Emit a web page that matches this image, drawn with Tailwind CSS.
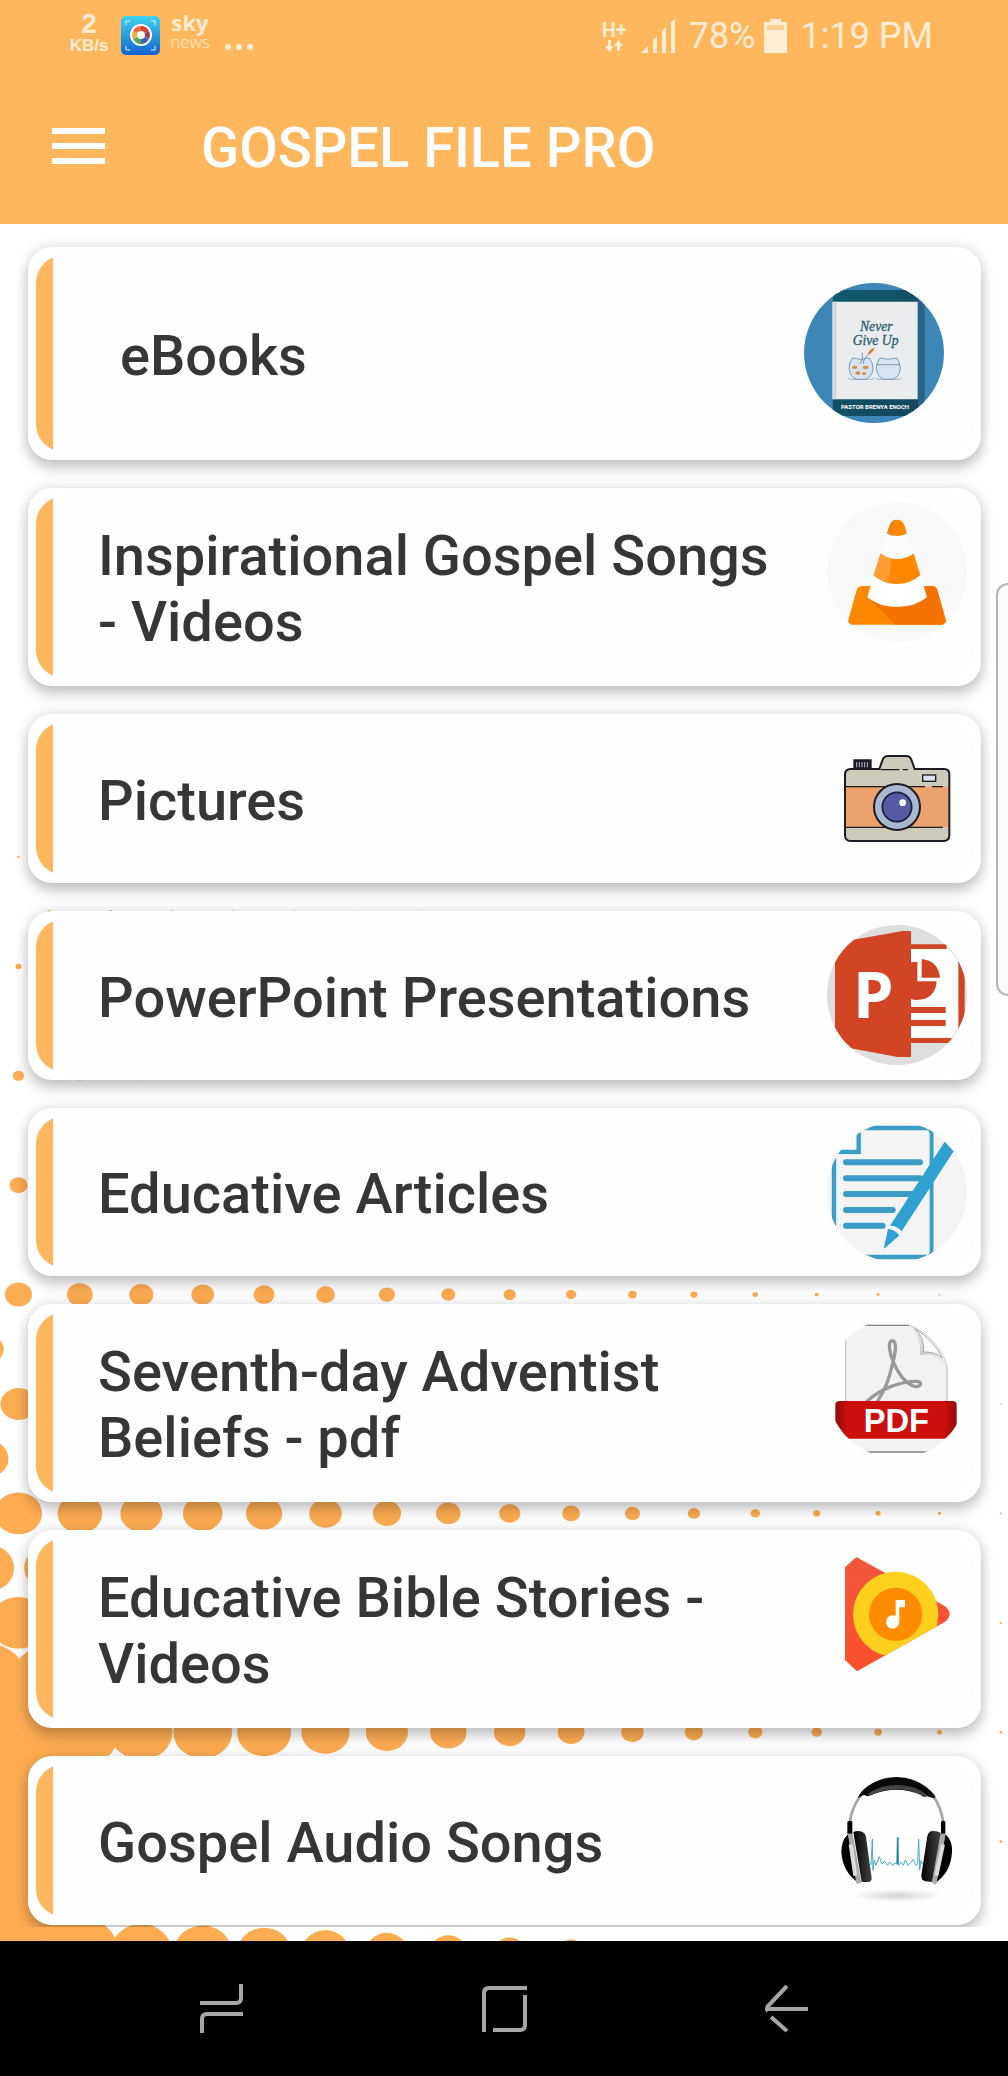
<!DOCTYPE html>
<html lang="en">
<head>
    <meta charset="UTF-8">
    <meta name="viewport" content="width=device-width, initial-scale=1.0">
    <title>Gospel File Pro</title>
    <script src="https://cdn.jsdelivr.net/npm/@tailwindcss/browser@4"></script>
</head>
<body class="bg-white font-['Roboto',sans-serif]">
    <div class="relative flex min-h-screen flex-col overflow-hidden">
        <!-- Halftone background -->
        <svg id="dots" class="absolute left-0 top-0 -z-10 h-[2076px] w-[1040px]" fill="#fdac52" aria-hidden="true"></svg>

        <!-- Header -->
        <header class="bg-[#ffb75e]">
            <div class="flex h-[71px] items-center justify-between pl-[69px] pr-[75px] text-[#ffedd3]">
                <div class="flex items-center">
                    <div class="flex w-10 flex-col items-center pb-1 font-['Liberation_Sans',sans-serif] font-bold">
                        <span class="text-[28px] leading-6">2</span>
                        <span class="text-[17px] leading-5">KB/s</span>
                    </div>
                    <svg class="ml-3 size-[39px]" viewBox="0 0 39 39">
                        <defs>
                            <linearGradient id="app" x1="0" y1="0" x2="0" y2="1">
                                <stop offset="0" stop-color="#3fd3ee"/>
                                <stop offset="1" stop-color="#1263cf"/>
                            </linearGradient>
                        </defs>
                        <rect width="39" height="39" rx="5" fill="url(#app)"/>
                        <path d="M5 9V5h4M30 5h4v4M34 30v4h-4M9 34H5v-4" fill="none" stroke="#dff4ff"/>
                        <circle cx="20" cy="19" r="11" fill="#fff"/>
                        <path d="M20 19V10a9 9 0 0 1 8 5z" fill="#d8403c"/>
                        <path d="M20 19l8-4a9 9 0 0 1 0 8z" fill="#a03a6b"/>
                        <path d="M20 19l8 4a9 9 0 0 1-8 5z" fill="#3f66ac"/>
                        <path d="M20 19v9a9 9 0 0 1-8-5z" fill="#57a85a"/>
                        <path d="M20 19l-8 4a9 9 0 0 1 0-8z" fill="#e9b13c"/>
                        <path d="M20 19l-8-4a9 9 0 0 1 8-5z" fill="#ea6b3a"/>
                        <circle cx="20" cy="19" r="4" fill="#fff"/>
                    </svg>
                    <div class="ml-2 flex w-[44px] flex-col items-center pb-2">
                        <span class="font-['Open_Sans',sans-serif] text-[22px] font-bold leading-5">sky</span>
                        <span class="font-['Open_Sans',sans-serif] text-[17px] font-light leading-5">news</span>
                    </div>
                    <svg class="ml-3 h-[39px] w-[30px]" viewBox="0 0 30 39" fill="currentColor">
                        <circle cx="4" cy="31" r="3"/><circle cx="15" cy="31" r="3"/><circle cx="26" cy="31" r="3"/>
                    </svg>
                </div>
                <div class="flex items-center text-[36px] leading-none">
                    <div class="flex flex-col items-center">
                        <span class="text-[20px] font-bold leading-5">H+</span>
                        <svg class="h-3 w-5" viewBox="0 0 20 12" fill="currentColor">
                            <path d="M4 0h3v6h3L5.500 12 1 6h3zM13 11h3V6h3l-4.500-6L10 6h3z"/>
                        </svg>
                    </div>
                    <svg class="ml-[14px] h-[34px] w-[34px]" viewBox="0 0 34 34" fill="currentColor">
                        <path d="M0 34l7-7v7zM12 21l4-4v17h-4zM21 12l4-4v26h-4zM30 3l4-3v34h-4z"/>
                    </svg>
                    <span class="ml-[14px]">78%</span>
                    <svg class="ml-2 h-[34px] w-[23px]" viewBox="0 0 23 34" fill="currentColor">
                        <path d="M6 0h11v3h6v31H0V3h6z"/>
                        <rect x="3" y="6" width="17" height="5" fill="#ffd08f"/>
                    </svg>
                    <span class="ml-[14px]">1:19 PM</span>
                </div>
            </div>
            <div class="flex h-[153px] items-center pl-[52px]">
                <button type="button" aria-label="Open menu" class="pb-1 text-white">
                    <svg class="h-9 w-[53px]" viewBox="0 0 53 36" fill="currentColor">
                        <path d="M0 0h53v6H0zM0 15h53v6H0zM0 30h53v6H0z"/>
                    </svg>
                </button>
                <h1 class="ml-24 text-[56px] font-medium leading-[66px] text-white">GOSPEL FILE PRO</h1>
            </div>
        </header>

        <!-- Category list -->
        <main class="flex-1 pb-[13px]">
            <nav class="flex flex-col gap-7 overflow-hidden pb-[2px] pl-7 pr-[27px] pt-[23px] text-[56px] font-medium leading-[66px] text-[#363636]">
                <a href="#ebooks" class="rounded-[24px] bg-white p-2 shadow-[0_8px_14px_0_rgba(0,0,0,0.2),0_0_14px_rgba(0,0,0,0.12)]">
                    <div class="flex min-h-[197px] overflow-hidden rounded-[28px] bg-[#fefefe] shadow-[0_0_2px_#f4f4f4]">
                        <div class="w-[17px] shrink-0 bg-[#ffb75e]"></div>
                        <span class="flex-1 self-center pl-[67px] pt-1">eBooks</span>
                        <svg class="mr-[29px] mt-7 size-[140px] shrink-0 rounded-full" viewBox="72 129 420 420">
                            <defs>
                                <linearGradient id="teal" x1="0" y1="0" x2="1" y2="1">
                                    <stop offset="0" stop-color="#0f5a6e"/>
                                    <stop offset="1" stop-color="#15455c"/>
                                </linearGradient>
                            </defs>
                            <path d="M72 129h420v420H72z" fill="#3d86b8"/>
                            <path d="M412 150l22 20v340l-22 18z" fill="#2b6288"/>
                            <path d="M158 150h256v378H158z" fill="url(#teal)"/>
                            <path d="M157 185h256v293H157z" fill="#ebecee"/>
                            <path d="M161 185h8v293h-8z" fill="#cfd3d8"/>
                            <g font-family="Liberation Serif, serif" font-style="italic" fill="#2d6170" stroke="#2d6170" font-size="41">
                                <text x="240" y="272">Never</text>
                                <text x="218" y="314">Give Up</text>
                            </g>
                            <path d="M262 346q4-16 22-24q-4 16-22 24z" fill="#e0763a"/>
                            <g fill="#d5e4ee" stroke="#7c9ab4" stroke-width="3">
                                <path d="M218 354q-12 14-11 32q3 24 22 32h28q20-8 22-32q0-18-11-32q-25 8-50 0z"/>
                                <path d="M300 354q-12 14-11 32q3 24 22 32h28q20-8 22-32q0-18-11-32q-25 8-50 0z"/>
                                <path d="M290 374h70" fill="none"/>
                                <path d="M240 372q12-16 6-34M250 372q0-18 14-26" fill="none"/>
                            </g>
                            <g fill="#dd8b3d">
                                <ellipse cx="224" cy="382" rx="8" ry="5"/><ellipse cx="257" cy="382" rx="9" ry="5"/>
                                <ellipse cx="234" cy="399" rx="8" ry="5"/><ellipse cx="252" cy="401" rx="6" ry="4"/>
                            </g>
                            <path d="M204 414l8 4h64l6-4M286 414l8 4h64l6-4" fill="none" stroke="#7c9ab4" stroke-width="2"/>
                            <text x="285" y="507" text-anchor="middle" font-family="Roboto, sans-serif" font-weight="700" font-size="18" fill="#fff">PASTOR BRENYA ENOCH</text>
                        </svg>
                    </div>
                </a>

                <a href="#songs-videos" class="rounded-[24px] bg-white p-2 shadow-[0_8px_14px_0_rgba(0,0,0,0.2),0_0_14px_rgba(0,0,0,0.12)]">
                    <div class="flex min-h-[182px] overflow-hidden rounded-[28px] bg-[#fefefe] shadow-[0_0_2px_#f4f4f4]">
                        <div class="w-[17px] shrink-0 bg-[#ffb75e]"></div>
                        <span class="flex-1 self-center pl-[45px] pr-11 pt-1">Inspirational Gospel Songs - Videos</span>
                        <svg class="mr-[6px] mt-[6px] size-[140px] shrink-0 rounded-full" viewBox="141 786 420 420">
                            <path d="M141 786h420v420H141z" fill="#f9f9f9"/>
                            <path d="M230 1050q4-12 18-12h206q14 0 18 12l25 90q3 14-10 14H215q-13 0-10-14z" fill="#ff8800"/>
                            <path d="M262 1070l84 84h141q13 0 10-14l-25-90q-4-12-18-12h-20z" fill="#f57200"/>
                            <path d="M302 940l-40 132q35 29 89 29t90-29l-40-132z" fill="#fff"/>
                            <path d="M302 940q22 17 49 17t50-17l20 66q-30 26-70 26t-70-26z" fill="#ff8800"/>
                            <path d="M302 940q16 12 34 15l-12 74q-24-6-43-23z" fill="#ff9f33"/>
                            <path d="M321 881q5-20 10-30q7-12 20-12t20 12q5 10 10 30q-30 16-60 0z" fill="#ff8800"/>
                            <path d="M321 881q5-20 10-30q7-12 17-12q-8 18-9 49q-10-1-18-7z" fill="#f0801a"/>
                            <path d="M321 881l-19 59q22 17 49 17t50-17l-20-59q-30 14-60 0z" fill="#fcfcfc"/>
                        </svg>
                    </div>
                </a>

                <a href="#pictures" class="rounded-[24px] bg-white p-2 shadow-[0_8px_14px_0_rgba(0,0,0,0.2),0_0_14px_rgba(0,0,0,0.12)]">
                    <div class="flex min-h-[153px] overflow-hidden rounded-[28px] bg-[#fefefe] shadow-[0_0_2px_#f4f4f4]">
                        <div class="w-[17px] shrink-0 bg-[#ffb75e]"></div>
                        <span class="flex-1 self-center pl-[45px] pr-11 pt-1">Pictures</span>
                        <svg class="mr-[6px] mt-[6px] size-[140px] shrink-0" viewBox="141 84 420 420">
                            <path d="M220 178h55v30h-55z" fill="#1c1a26"/>
                            <path d="M230 186v16M238 186v16M246 186v16M254 186v16M262 186v16" stroke="#b9bccb" stroke-width="3"/>
                            <path d="M212 207h86l10-28q4-11 16-11h54q12 0 16 11l10 28h88q16 0 16 16v183q0 17-17 17H212q-17 0-17-17V224q0-17 17-17z" fill="#cfcbbb"/>
                            <path d="M197 260h308v121H197z" fill="#eba26f"/>
                            <g fill="none" stroke="#1c1c24" stroke-width="4">
                                <path d="M302 209h56M368 209h16M197 260h238M456 260h33M197 382h292"/>
                                <path stroke-width="6" d="M212 207h86l10-28q4-11 16-11h54q12 0 16 11l10 28h88q16 0 16 16v183q0 17-17 17H212q-17 0-17-17V224q0-17 17-17z"/>
                            </g>
                            <rect x="428" y="225" width="39" height="19" fill="#d9e0f0" stroke="#1c1c24" stroke-width="4"/>
                            <circle cx="351" cy="321" r="69" fill="#a9b7cf" stroke="#1c1c24" stroke-width="6"/>
                            <circle cx="351" cy="321" r="44" fill="#535ba3" stroke="#1c1c3c" stroke-width="5"/>
                            <circle cx="368" cy="308" r="10" fill="#fff"/>
                        </svg>
                    </div>
                </a>

                <a href="#powerpoint" class="rounded-[24px] bg-white p-2 shadow-[0_8px_14px_0_rgba(0,0,0,0.2),0_0_14px_rgba(0,0,0,0.12)]">
                    <div class="flex min-h-[153px] overflow-hidden rounded-[28px] bg-[#fefefe] shadow-[0_0_2px_#f4f4f4]">
                        <div class="w-[17px] shrink-0 bg-[#ffb75e]"></div>
                        <span class="flex-1 self-center pl-[45px] pr-11 pt-1">PowerPoint Presentations</span>
                        <svg class="mr-[6px] mt-[6px] size-[140px] shrink-0 rounded-full" viewBox="141 675 420 420">
                            <path d="M141 675h420v420H141z" fill="#dedede"/>
                            <path d="M392 733h130q32 0 32 32v230q0 34-32 34H392z" fill="#d04526"/>
                            <path d="M392 747h143v267H392z" fill="#fff"/>
                            <path d="M500 747h61v-40h-61zM535 747h26v45l-10-5q-3-20-16-25z" fill="#fdfdfd"/>
                            <path d="M392 787q9-2 20-1v58h58q-4 55-60 56q-10 0-18-3zM425 777q50 5 55 56h-55z" fill="#d04526"/>
                            <path d="M392 921h105v18H392zM392 960h105v18H392z" fill="#d04526"/>
                            <path d="M165 735l55-16 148-26h25v378h-40l-140-26-48-10z" fill="#d14424"/>
                            <text x="218" y="953" font-family="Open Sans, sans-serif" font-weight="700" font-size="196" fill="#fff">P</text>
                        </svg>
                    </div>
                </a>

                <a href="#articles" class="rounded-[24px] bg-white p-2 shadow-[0_8px_14px_0_rgba(0,0,0,0.2),0_0_14px_rgba(0,0,0,0.12)]">
                    <div class="flex min-h-[152px] overflow-hidden rounded-[28px] bg-[#fefefe] shadow-[0_0_2px_#f4f4f4]">
                        <div class="w-[17px] shrink-0 bg-[#ffb75e]"></div>
                        <span class="flex-1 self-center pl-[45px] pr-11 pt-1">Educative Articles</span>
                        <svg class="mr-[6px] mt-[6px] size-[140px] shrink-0 rounded-full" viewBox="141 94 420 420">
                            <path d="M141 94h420v420H141z" fill="#f4f4f4"/>
                            <path d="M141 94h100v96H141zM141 94h420v11H141zM141 507h420v10H141z" fill="#fefefe"/>
                            <path d="M236 112v72h-74v315h280q12 0 12-12V125q0-13-13-13z" fill="#f4f4f4" stroke="#3b9cc5" stroke-width="13"/>
                            <path d="M246 126v66h-72v300M447 126v360" fill="none" stroke="#e3f3f9" stroke-width="4"/>
                            <path d="M198 215h222M198 263h222M198 310h200M198 358h140M198 405h110" stroke="#3b9cc5" stroke-width="18" stroke-linecap="round"/>
                            <path d="M494 153l27 29-156 240q-12-17-35-17z" fill="#2fa0d0"/>
                            <path d="M323 413q26 4 36 22l-46 40q-4-3-2-7z" fill="#2fa0d0" stroke="#f4f4f4" stroke-width="3"/>
                        </svg>
                    </div>
                </a>

                <a href="#beliefs" class="rounded-[24px] bg-white p-2 shadow-[0_8px_14px_0_rgba(0,0,0,0.2),0_0_14px_rgba(0,0,0,0.12)]">
                    <div class="flex min-h-[182px] overflow-hidden rounded-[28px] bg-[#fefefe] shadow-[0_0_2px_#f4f4f4]">
                        <div class="w-[17px] shrink-0 bg-[#ffb75e]"></div>
                        <span class="flex-1 self-center pl-[45px] pr-11 pt-1">Seventh-day Adventist Beliefs - pdf</span>
                        <svg class="mr-[6px] mt-[6px] size-[140px] shrink-0 rounded-full" viewBox="141 684 420 420">
                            <defs>
                                <linearGradient id="curl" x1="0" y1="1" x2="1" y2="0">
                                    <stop offset="0" stop-color="#8a8a8a"/>
                                    <stop offset=".6" stop-color="#f5f5f5"/>
                                </linearGradient>
                                <linearGradient id="banner" x1="0" x2="1">
                                    <stop offset="0" stop-color="#8e0c0c"/>
                                    <stop offset=".1" stop-color="#cc0e0e"/>
                                    <stop offset=".9" stop-color="#cc0e0e"/>
                                    <stop offset="1" stop-color="#8e0c0c"/>
                                </linearGradient>
                            </defs>
                            <path d="M197 706h190q40 14 72 48q34 34 42 80v253H197z" fill="#f2f2f2" stroke="#b5b5b5" stroke-width="3"/>
                            <path d="M197 706h190M240 1086h220" stroke="#8a8a8a" stroke-width="4"/>
                            <path d="M385 706q38 30 36 90q45-12 80 38q-8-46-42-80q-32-34-74-48z" fill="url(#curl)"/>
                            <path d="M404 716q30 26 27 70q34-1 56 18q-26-56-83-88z" fill="#fafafa" stroke="#a5a5a5" stroke-width="3"/>
                            <path d="M338 752c-18 0-8 42 3 66c14 32 34 60 58 70c24 6 32-14 10-14c-50 0-110 24-150 62M338 752c16 4 6 46-2 76c-8 38-26 80-44 106" fill="none" stroke="#999" stroke-width="10"/>
                            <rect x="166" y="933" width="364" height="113" rx="12" fill="url(#banner)"/>
                            <text x="349" y="1026" text-anchor="middle" font-family="Liberation Sans, sans-serif" font-weight="700" font-size="98" fill="#fff">PDF</text>
                        </svg>
                    </div>
                </a>

                <a href="#bible-stories" class="rounded-[24px] bg-white p-2 shadow-[0_8px_14px_0_rgba(0,0,0,0.2),0_0_14px_rgba(0,0,0,0.12)]">
                    <div class="flex min-h-[182px] overflow-hidden rounded-[28px] bg-[#fefefe] shadow-[0_0_2px_#f4f4f4]">
                        <div class="w-[17px] shrink-0 bg-[#ffb75e]"></div>
                        <span class="flex-1 self-center pl-[45px] pr-11 pt-1">Educative Bible Stories - Videos</span>
                        <svg class="mr-[6px] mt-[6px] size-[140px] shrink-0" viewBox="141 132 420 420">
                            <defs>
                                <linearGradient id="play" x1="0" y1="0" x2="0" y2="1">
                                    <stop offset="0" stop-color="#f0563b"/>
                                    <stop offset="1" stop-color="#fa4f2c"/>
                                </linearGradient>
                                <clipPath id="tri">
                                    <path d="M150 120h420v190l-76 56L231 514h-80z"/>
                                </clipPath>
                            </defs>
                            <path d="M195 202l34-31L494 318q30 24 0 48L231 514l-36-34z" fill="url(#play)"/>
                            <g clip-path="url(#tri)">
                                <circle cx="347" cy="343" r="128" fill="#fed01e"/>
                                <circle cx="347" cy="343" r="80" fill="#ff8c00"/>
                            </g>
                            <path d="M347 300h28v22h-17v44a20 20 0 1 1-11-18z" fill="#fff"/>
                        </svg>
                    </div>
                </a>

                <a href="#audio" class="rounded-[24px] bg-white p-2 shadow-[0_8px_14px_0_rgba(0,0,0,0.2),0_0_14px_rgba(0,0,0,0.12)]">
                    <div class="flex min-h-[153px] overflow-hidden rounded-[28px] bg-[#fefefe] shadow-[0_0_2px_#f4f4f4]">
                        <div class="w-[17px] shrink-0 bg-[#ffb75e]"></div>
                        <span class="flex-1 self-center pl-[45px] pr-11 pt-1">Gospel Audio Songs</span>
                        <svg class="mr-[6px] mt-[6px] size-[140px] shrink-0" viewBox="141 810 420 420">
                            <defs>
                                <radialGradient id="floor">
                                    <stop offset="0" stop-color="#d2d2d2"/>
                                    <stop offset="1" stop-color="#fff"/>
                                </radialGradient>
                                <linearGradient id="pad" x1="0" x2="1">
                                    <stop offset="0" stop-color="#000"/>
                                    <stop offset="1" stop-color="#444"/>
                                </linearGradient>
                            </defs>
                            <ellipse cx="352" cy="1187" rx="134" ry="20" fill="url(#floor)"/>
                            <path d="M209 968q6-44 32-80M490 968q-6-44-30-80" fill="none" stroke="#a5a5a5" stroke-width="8"/>
                            <path d="M233 895q8-22 32-38q38-26 84-26t84 26q24 16 34 34l-6 4-20-6-10 2-10-8q-36-14-72-14t-72 14l-12 6-14-4z" fill="#0a0a0a"/>
                            <path d="M262 885q8-12 44-24q44-12 90 0q36 12 46 26l-10 3q-40-22-82-22t-76 18z" fill="#444"/>
                            <path d="M202 965q8-6 15 0v36h-15zM483 965q8-6 13 0v36h-13z" fill="#000"/>
                            <path d="M204 1003q-20 18-20 54q4 60 52 92zM496 1003q22 18 20 54q-4 64-54 94z" fill="#000"/>
                            <path d="M204 1003l14-2 26 148-14 2q-14-60-26-148zM496 1003l-18-2-22 148 12 5q18-72 28-151z" fill="#aaa"/>
                            <path d="M212 1033l14 94M489 1033l-20 94" stroke="#ddd" stroke-width="12"/>
                            <path d="M220 996q14-6 28 0q8 4 10 14l17 124q0 12-12 12h-18z" fill="url(#pad)"/>
                            <path d="M482 998q-16-8-30-4q-8 4-10 14l-18 118q0 16 12 18l20 2z" fill="url(#pad)"/>
                            <path d="M266 1088L273 1094L277 1017L279 1110L283 1080L288 1096L298 1070L306 1092L314 1084L322 1096L330 1086L338 1096L346 1088L350 1094L353 1012L356 1096L364 1086L370 1096L376 1080L384 1096L392 1088L400 1078L408 1096L413 1092L416 1017L419 1110L423 1082L428 1092" fill="none" stroke="#43aac8" stroke-width="3"/>
                            <path d="M353 1012V1092" stroke="#2b86a4" stroke-width="5"/>
                        </svg>
                    </div>
                </a>
            </nav>
        </main>

        <!-- Edge panel handle -->
        <div class="absolute right-0 top-[583px] h-[413px] w-3 rounded-l-[14px] border-2 border-r-0 border-[#b5b5b5] bg-[#fbfbfb]"></div>

        <!-- System navigation -->
        <footer class="bg-black px-[8%]">
            <div class="grid h-[135px] grid-cols-3 place-items-center text-[#a6a6a6]">
                <button type="button" aria-label="Recent apps">
                    <svg class="h-[49px] w-[43px]" viewBox="0 0 43 49" fill="none" stroke="currentColor" stroke-width="4">
                        <path d="M0 19h36q5 0 5-5V0M43 30H7q-5 0-5 5v14"/>
                    </svg>
                </button>
                <button type="button" aria-label="Home">
                    <svg class="h-[46px] w-[45px]" viewBox="0 0 45 46" fill="none" stroke="currentColor" stroke-width="4">
                        <path d="M45 2H7Q2 2 2 7v39M43 9v30q0 5-5 5H11"/>
                    </svg>
                </button>
                <button type="button" aria-label="Back">
                    <svg class="h-[49px] w-[43px]" viewBox="0 0 43 49" fill="none" stroke="currentColor" stroke-width="4">
                        <path d="M43 25H3M22 2L3 22q-2 3 0 5M6 33l16 14"/>
                    </svg>
                </button>
            </div>
        </footer>
    </div>

    <script>
        // dot radius at the left edge, one entry per half row
        const rowRadius = [1.2, 2, 3, 4.3, 5.7, 7.3, 9, 11.2, 13.5, 15.8, 18, 20.7, 23.5, 26.3, 29, 32, 35, 36, 36, 35, 34];
        // how the radius shrinks from column to column
        const falloff = [1, 0.95, 0.89, 0.84, 0.77, 0.69, 0.6, 0.52, 0.45, 0.38, 0.32, 0.26, 0.2, 0.15, 0.11, 0.07, 0.04, 0.02];

        let dots = '';
        rowRadius.forEach((radius, row) => {
            const y = 857 + row * 54.7;
            const shift = row % 2 ? -0.5 : 0;
            falloff.forEach((scale, col) => {
                let r = radius * scale;
                if (r < 0.6) return;
                // the bottom left corner runs together into a solid area
                if (row > 14 && col < 2) r += 6;
                const x = 18.5 + (col + shift) * 61.4;
                dots += `<ellipse cx="${x}" cy="${y}" rx="${r}" ry="${r * 0.89}"/>`;
            });
        });
        document.getElementById('dots').innerHTML = dots;
    </script>
</body>
</html>
